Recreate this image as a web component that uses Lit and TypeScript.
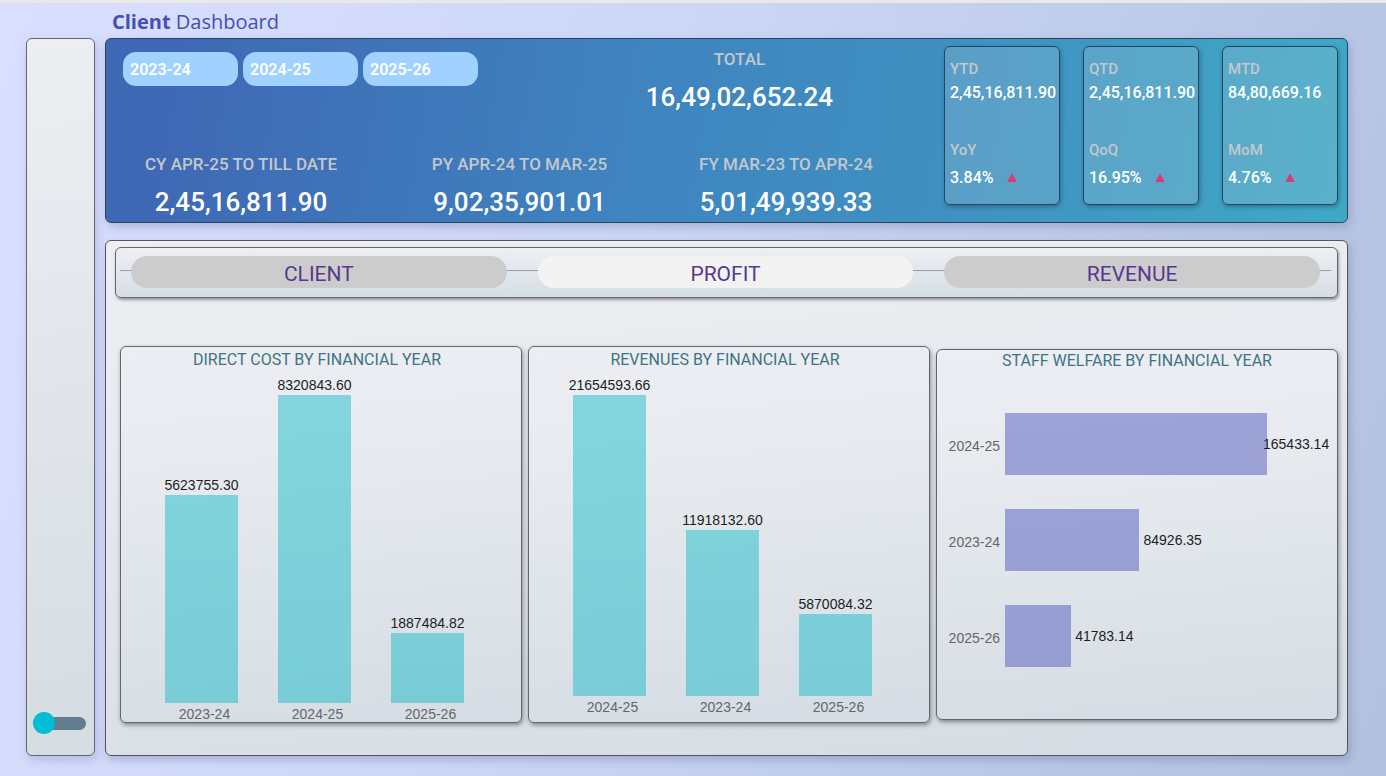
import { LitElement, html, css, svg } from "lit";
import { customElement, property, state } from "lit/decorators.js";
import { classMap } from "lit/directives/class-map.js";
import { styleMap } from "lit/directives/style-map.js";

interface Point {
  year: string;
  amount: number;
}

const share = (point: Point, points: Point[]) =>
  (point.amount / Math.max(...points.map((p) => p.amount))) * 100;

const cardSurface = css`
  :host {
    display: flex;
    flex-direction: column;
    box-sizing: border-box;
    border: 1px solid #62666e;
    border-radius: 6px;
    background: linear-gradient(175deg, #edeef3, #e6eaef 35%, #d5dce3);
    box-shadow: 1px 2px 4px rgba(40, 45, 60, 0.5);
    font-family: "Liberation Sans", Arial, sans-serif;
    font-size: 14px;
  }
  .title {
    margin: 0;
    font: 400 16px/22px Roboto, sans-serif;
    color: #3c7484;
    text-align: center;
  }
`;

@customElement("column-chart")
class ColumnChart extends LitElement {
  @property() heading = "";
  @property({ attribute: false }) points: Point[] = [];

  static styles = [
    cardSurface,
    css`
      .title {
        padding: 2px 8px 0 0;
      }
      .plot {
        flex: 1;
        display: grid;
        grid-template-columns: repeat(3, minmax(0, 1fr));
        gap: 40px;
        padding: 24px 57px 0 44px;
      }
      .column {
        display: flex;
        flex-direction: column;
        justify-content: flex-end;
        align-items: center;
      }
      .amount {
        flex: none;
        line-height: 20px;
        color: #1d1d1f;
        white-space: nowrap;
      }
      .bar {
        flex: none;
        align-self: stretch;
        background: rgba(0, 183, 195, 0.44);
      }
      .axis {
        display: grid;
        grid-template-columns: repeat(3, minmax(0, 1fr));
        gap: 40px;
        padding: 3px 54px 0 47px;
        line-height: 16px;
        color: #666;
        text-align: center;
        white-space: nowrap;
      }
    `,
  ];

  render() {
    return html`
      <h2 class="title">${this.heading}</h2>
      <div class="plot">
        ${this.points.map(
          (p) => html`<div class="column">
            <span class="amount">${p.amount.toFixed(2)}</span>
            <div class="bar" style=${styleMap({ height: `${share(p, this.points)}%` })}></div>
          </div>`
        )}
      </div>
      <div class="axis">${this.points.map((p) => html`<span>${p.year}</span>`)}</div>
    `;
  }
}

@customElement("row-chart")
class RowChart extends LitElement {
  @property() heading = "";
  @property({ attribute: false }) points: Point[] = [];

  static styles = [
    cardSurface,
    css`
      .rows {
        display: flex;
        flex-direction: column;
        gap: 34px;
        padding: 41px 70px 0 10px;
      }
      .row {
        display: grid;
        grid-template-columns: 53px 1fr;
        gap: 5px;
        align-items: center;
        white-space: nowrap;
      }
      .year {
        padding-top: 4px;
        color: #666;
        text-align: right;
      }
      .track {
        display: flex;
        align-items: center;
        height: 62px;
      }
      .bar {
        flex: none;
        height: 100%;
        background: rgba(72, 80, 184, 0.47);
      }
      .amount {
        margin-left: 4px;
        color: #1d1d1f;
      }
      .amount.longest {
        margin-left: -4px;
      }
    `,
  ];

  render() {
    return html`
      <h2 class="title">${this.heading}</h2>
      <div class="rows">
        ${this.points.map((p) => {
          const width = share(p, this.points);
          return html`<div class="row">
            <span class="year">${p.year}</span>
            <div class="track">
              <div class="bar" style=${styleMap({ width: `${width}%` })}></div>
              <span class=${classMap({ amount: true, longest: width === 100 })}>${p.amount.toFixed(2)}</span>
            </div>
          </div>`;
        })}
      </div>
    `;
  }
}

@customElement("app-root")
class AppRoot extends LitElement {
  @state() private tab = "PROFIT";

  private years = ["2023-24", "2024-25", "2025-26"];
  private tabs = ["CLIENT", "PROFIT", "REVENUE"];
  private periods = [
    { label: "CY APR-25 TO TILL DATE", value: "2,45,16,811.90" },
    { label: "PY APR-24 TO MAR-25", value: "9,02,35,901.01" },
    { label: "FY MAR-23 TO APR-24", value: "5,01,49,939.33" },
  ];
  private kpis = [
    { label: "YTD", value: "2,45,16,811.90", change: "YoY", rate: "3.84%" },
    { label: "QTD", value: "2,45,16,811.90", change: "QoQ", rate: "16.95%" },
    { label: "MTD", value: "84,80,669.16", change: "MoM", rate: "4.76%" },
  ];
  private directCost: Point[] = [
    { year: "2023-24", amount: 5623755.3 },
    { year: "2024-25", amount: 8320843.6 },
    { year: "2025-26", amount: 1887484.82 },
  ];
  private revenues: Point[] = [
    { year: "2024-25", amount: 21654593.66 },
    { year: "2023-24", amount: 11918132.6 },
    { year: "2025-26", amount: 5870084.32 },
  ];
  private welfare: Point[] = [
    { year: "2024-25", amount: 165433.14 },
    { year: "2023-24", amount: 84926.35 },
    { year: "2025-26", amount: 41783.14 },
  ];

  static styles = css`
    :host {
      display: block;
      font-family: Roboto, sans-serif;
    }
    * {
      box-sizing: border-box;
    }
    .page {
      display: grid;
      grid-template-columns: 69px minmax(0, 1fr);
      grid-template-rows: 35px minmax(0, 1fr);
      column-gap: 10px;
      min-height: 100vh;
      padding: 0 38px 20px 26px;
      border-top: 3px solid #e9e9ea;
      background: linear-gradient(110deg, #dadfff, #ced7f7 40%, #b9c7e6 80%, #b2c1de);
    }
    .heading {
      grid-column: 2;
      margin: 0;
      padding: 5px 0 0 7px;
      font: 400 20px/28px "Open Sans", "Noto Sans", sans-serif;
      color: #4450b4;
    }
    .heading strong {
      font-weight: 700;
    }
    .sidebar {
      display: flex;
      flex-direction: column;
      justify-content: flex-end;
      padding: 0 0 25px 9px;
      border: 1px solid #62666e;
      border-radius: 6px;
      background: linear-gradient(175deg, #edeef2, #d5dce2);
      box-shadow: 2px 4px 10px rgba(90, 90, 160, 0.25);
    }
    .switch {
      appearance: none;
      position: relative;
      width: 50px;
      height: 13px;
      margin: 0;
      border-radius: 7px;
      background: #607d8b;
    }
    .switch::before {
      content: "";
      position: absolute;
      left: -3px;
      top: -5px;
      width: 22px;
      height: 22px;
      border-radius: 50%;
      background: #00bcd4;
    }
    .switch:checked::before {
      left: 31px;
    }
    .content {
      display: flex;
      flex-direction: column;
      gap: 17px;
    }
    .hero {
      display: flex;
      height: 185px;
      border: 1px solid #24475e;
      border-radius: 6px;
      background: linear-gradient(100deg, #3f68b4 5%, #3f85c0 45%, #3f92c1 70%, #3fa9c6);
      box-shadow: 2px 4px 10px rgba(90, 90, 150, 0.3);
      padding-right: 9px;
    }
    .summary {
      flex: 1;
      display: flex;
      flex-direction: column;
      justify-content: space-between;
      padding: 8px 35px 2px 0;
    }
    .top {
      display: flex;
      justify-content: space-between;
      align-items: flex-start;
      padding: 0 76px 0 17px;
    }
    .years {
      display: flex;
      gap: 5px;
      padding-top: 5px;
    }
    .year {
      width: 115px;
      height: 34px;
      padding: 2px 7px 0;
      border: 0;
      border-radius: 13px;
      background: #a0d1ff;
      color: #fff;
      font: 600 16px/32px Roboto, sans-serif;
      text-align: left;
    }
    .periods {
      display: grid;
      grid-template-columns: 270fr 287fr 246fr;
    }
    .metric {
      text-align: center;
      white-space: nowrap;
    }
    .label {
      color: #c4c8cc;
      font-size: 17px;
      font-weight: 500;
      line-height: 24px;
    }
    .figure {
      margin-top: 8px;
      color: #fff;
      font-size: 26px;
      font-weight: 500;
      line-height: 36px;
    }
    .kpis {
      display: grid;
      grid-template-columns: repeat(3, 116px);
      gap: 23px;
      padding-top: 7px;
      align-self: flex-start;
    }
    .kpi {
      display: flex;
      flex-direction: column;
      height: 159px;
      padding: 10px 0 0 5px;
      border: 1px solid #24475e;
      border-radius: 6px;
      background: rgba(200, 215, 225, 0.2);
      box-shadow: 1px 2px 4px rgba(30, 60, 80, 0.45);
      color: #fff;
      font-size: 16px;
      font-weight: 500;
      line-height: 24px;
      white-space: nowrap;
    }
    .name {
      color: #c4c8cc;
      font-size: 15px;
    }
    .change {
      margin-top: 33px;
      color: #c4c8cc;
      font-size: 15px;
    }
    .rate {
      display: flex;
      align-items: center;
      gap: 13px;
      margin-top: 4px;
    }
    .panel {
      flex: 1;
      display: flex;
      flex-direction: column;
      gap: 48px;
      padding: 6px 9px 32px;
      border: 1px solid #53565f;
      border-radius: 6px;
      background: linear-gradient(175deg, #eeeef3, #e8ebef 30%, #d5dce3);
      box-shadow: 2px 4px 8px rgba(80, 85, 140, 0.3);
    }
    .tabs {
      display: grid;
      grid-template-columns: repeat(3, 1fr);
      gap: 31px;
      padding: 8px 17px 9px 15px;
      border: 1px solid #62666e;
      border-radius: 6px;
      background:
        linear-gradient(#9b9fa5, #9b9fa5) 4px 22px / calc(100% - 10px) 1px no-repeat,
        linear-gradient(#eeeff3, #d6dfe4);
      box-shadow: 1px 2px 3px rgba(40, 45, 60, 0.45);
    }
    .tab {
      height: 32px;
      padding: 4px 0 0;
      border: 0;
      border-radius: 16px;
      background: #ccc;
      color: #57398f;
      font: 400 21px/28px Roboto, sans-serif;
    }
    .tab.active {
      background: #f3f3f3;
    }
    .charts {
      flex: 1;
      display: grid;
      grid-template-columns: repeat(3, minmax(0, 1fr));
      gap: 6px;
      padding-left: 5px;
    }
    .raised {
      padding-bottom: 7px;
    }
    .inset {
      margin: 3px 0;
    }
  `;

  render() {
    return html`
      <div class="page">
        <h1 class="heading"><strong>Client</strong> Dashboard</h1>
        <aside class="sidebar">
          <input class="switch" type="checkbox" role="switch" aria-label="Toggle view" />
        </aside>
        <main class="content">
          <section class="hero">
            <div class="summary">
              <div class="top">
                <div class="years">
                  ${this.years.map((y) => html`<button class="year">${y}</button>`)}
                </div>
                <div class="metric">
                  <div class="label">TOTAL</div>
                  <div class="figure">16,49,02,652.24</div>
                </div>
              </div>
              <div class="periods">
                ${this.periods.map(
                  (p) => html`<div class="metric">
                    <div class="label">${p.label}</div>
                    <div class="figure">${p.value}</div>
                  </div>`
                )}
              </div>
            </div>
            <div class="kpis">
              ${this.kpis.map(
                (k) => html`<div class="kpi">
                  <span class="name">${k.label}</span>
                  <span>${k.value}</span>
                  <span class="change">${k.change}</span>
                  <span class="rate">
                    ${k.rate}
                    <svg width="10" height="10" viewBox="0 0 10 10" aria-hidden="true">
                      ${svg`<path d="M5 0L9.7 9H0.3Z" fill="#de3a72"/>`}
                    </svg>
                  </span>
                </div>`
              )}
            </div>
          </section>
          <section class="panel">
            <nav class="tabs">
              ${this.tabs.map(
                (t) => html`<button
                  class=${classMap({ tab: true, active: t === this.tab })}
                  @click=${() => (this.tab = t)}
                >
                  ${t}
                </button>`
              )}
            </nav>
            <div class="charts">
              <column-chart heading="DIRECT COST BY FINANCIAL YEAR" .points=${this.directCost}></column-chart>
              <column-chart
                class="raised"
                heading="REVENUES BY FINANCIAL YEAR"
                .points=${this.revenues}
              ></column-chart>
              <row-chart class="inset" heading="STAFF WELFARE BY FINANCIAL YEAR" .points=${this.welfare}></row-chart>
            </div>
          </section>
        </main>
      </div>
    `;
  }
}
